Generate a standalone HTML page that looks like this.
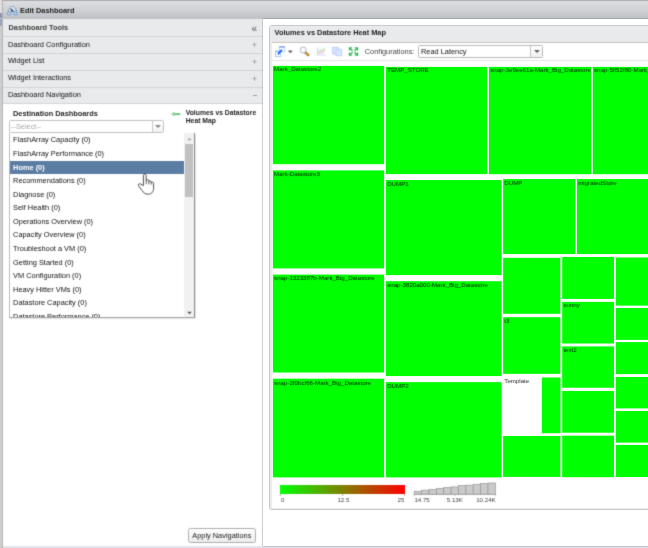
<!DOCTYPE html>
<html>
<head>
<meta charset="utf-8">
<title>Edit Dashboard</title>
<style>
html,body{margin:0;padding:0;}
body{width:648px;height:548px;overflow:hidden;background:#fff;font-family:"Liberation Sans",sans-serif;font-size:7.38px;color:#111;position:relative;}
div{box-sizing:border-box;}
.abs{position:absolute;}
#strip{left:0;top:0;width:3px;height:548px;background:linear-gradient(to right,#d0d0d0 0,#cccccc 55%,#b6b6b6 62%,#b4b4b4 100%);}
#titlebar{left:3px;top:0;width:645px;height:19px;background:linear-gradient(to bottom,#a9a9a9 0,#acacac 0.8px,#dcdee1 1.4px,#d2d4d8 8px,#bec1c5 18.4px,#c6c8cb 19px);}
#titletext{left:20px;top:5.6px;font-weight:bold;color:#222;line-height:9px;white-space:nowrap;}
#leftpanel{left:3px;top:19px;width:260.3px;height:527px;background:#fff;border-right:1.2px solid #ececec;}
.hrow{position:absolute;left:3px;width:260px;background:#e9eaeb;border-bottom:1px solid #d3d4d5;white-space:nowrap;color:#111;}
.hrow span{position:absolute;left:5px;}
.plus{position:absolute;color:#8c8c8c;}
#bottombar{left:3px;top:546px;width:645px;height:2px;background:#dfe5ea;}
.t{position:absolute;font-size:6.15px;line-height:7px;color:#001c00;overflow:hidden;white-space:nowrap;padding:0 0 0 1.2px;}
.li{height:13.58px;line-height:13.58px;padding-left:3.3px;white-space:nowrap;color:#111;}
.li.sel{background:#5b7da4;color:#fff;font-weight:bold;}
.bar{position:absolute;background:#cbcbcb;border:0.6px solid #9a9a9a;border-bottom:none;}
.lg{position:absolute;font-size:6.15px;color:#444;line-height:7px;white-space:nowrap;}
</style>
</head>
<body>
<svg width="0" height="0" style="position:absolute"><defs><filter id="softblur" x="0" y="0" width="100%" height="100%" color-interpolation-filters="sRGB"><feConvolveMatrix order="3" kernelMatrix="0.02 0.1 0.02 0.1 0.52 0.1 0.02 0.1 0.02" divisor="1" edgeMode="duplicate" preserveAlpha="true"/></filter><filter id="softblur2" x="0" y="0" width="100%" height="100%" color-interpolation-filters="sRGB"><feConvolveMatrix order="3" kernelMatrix="0.01 0.07 0.01 0.07 0.68 0.07 0.01 0.07 0.01" divisor="1" edgeMode="none" preserveAlpha="false"/></filter></defs></svg>
<div id="root" style="position:absolute;left:0;top:0;width:648px;height:548px;overflow:hidden;will-change:transform;">
<div id="base" style="position:absolute;left:0;top:0;width:648px;height:548px;overflow:hidden;filter:url(#softblur);">
<div id="strip" class="abs"></div>
<div class="abs" style="left:0;top:0;width:2.2px;height:12.6px;background:#dedede"></div>
<div class="abs" style="left:0;top:12.6px;width:2.2px;height:5px;background:#8898b0"></div>
<div class="abs" style="left:0;top:19.2px;width:2.2px;height:6.4px;background:#97a7bd"></div>
<div id="titlebar" class="abs"></div>
<svg class="abs" style="left:6px;top:5px" width="13" height="11" viewBox="6 5 13 11">
  <defs><linearGradient id="dg" x1="0" y1="0" x2="1" y2="1"><stop offset="0" stop-color="#ffffff"/><stop offset="1" stop-color="#9fc3ec"/></linearGradient></defs>
  <path d="M8.3 12.4 A4.2 6 0 0 1 16.7 12.4 L14.6 12.6 L12.5 10.2 L10.4 12.6 Z" fill="url(#dg)" stroke="#7d8794" stroke-width="0.7"/>
  <circle cx="9.2" cy="13.2" r="1.9" fill="#9dbfe6" stroke="#5e93d1" stroke-width="0.6"/>
  <circle cx="9" cy="13.2" r="0.6" fill="#eaf2fb"/>
  <circle cx="15.7" cy="13.2" r="1.9" fill="#9dbfe6" stroke="#5e93d1" stroke-width="0.6"/>
  <circle cx="15.6" cy="13" r="0.6" fill="#eaf2fb"/>
  <path d="M10.6 8.6 L13 11.7" stroke="#2a2a2a" stroke-width="1.1" fill="none"/>
</svg>
<div id="titletext" class="abs">Edit Dashboard</div>

<div id="leftpanel" class="abs"></div>
<div class="hrow" style="top:19px;height:18px;font-weight:bold;color:#3d3d3d"><span style="left:5.5px;top:3.5px;line-height:9px">Dashboard Tools</span></div>
<div class="hrow" style="top:37px;height:17px"><span style="left:4.9px;top:2.9px;line-height:9px">Dashboard Configuration</span></div>
<div class="hrow" style="top:54px;height:17px"><span style="left:4.9px;top:2.45px;line-height:9px">Widget List</span></div>
<div class="hrow" style="top:71px;height:17px"><span style="left:4.9px;top:2.45px;line-height:9px">Widget Interactions</span></div>
<div class="hrow" style="top:88px;height:16px"><span style="left:4.9px;top:2.05px;line-height:9px">Dashboard Navigation</span></div>
<!-- tool icons -->
<div class="abs" style="left:251.4px;top:23.6px;font-size:10px;line-height:10px;color:#555">&laquo;</div>
<div class="plus" style="left:252.1px;top:41.3px;font-size:8.6px;line-height:9px">+</div>
<div class="plus" style="left:252.1px;top:58px;font-size:8.6px;line-height:9px">+</div>
<div class="plus" style="left:252.1px;top:75px;font-size:8.6px;line-height:9px">+</div>
<div class="plus" style="left:252.2px;top:91.2px;font-size:8.6px;line-height:9px;color:#7a7a7a">&minus;</div>

<!-- navigation content -->
<div class="abs" style="left:13px;top:109.4px;font-weight:bold;line-height:9px;white-space:nowrap;color:#1c1c1c">Destination Dashboards</div>
<div class="abs" style="left:8.6px;top:119.6px;width:155px;height:13.4px;border:0.8px solid #c2c2c2;border-radius:1.6px;background:#fff;overflow:hidden"><div style="position:absolute;right:0;top:0;width:11px;height:12px;border-left:0.8px solid #c8c8c8;background:linear-gradient(#ffffff,#f1f1f1)"></div></div>
<svg class="abs" style="left:155px;top:124px" width="6" height="5" viewBox="0 0 6 5"><path d="M0.4 1 H5.6 V1.5 L3 4 L0.4 1.5 Z" fill="#8a8a8a"/></svg>
<div class="abs" style="left:11px;top:121.6px;line-height:9px;color:#aaa">--Select--</div>
<svg class="abs" style="left:170.5px;top:111px" width="10" height="6" viewBox="0 0 10 6">
  <path d="M3.2 2.3 H9.2 V3.9 H3.2 Z" fill="#48ba5b"/><path d="M0.5 3.1 L3.1 1.1 V5.1 Z" fill="#b5e8bd" stroke="#62c873" stroke-width="0.55" stroke-linejoin="round"/>
</svg>
<div class="abs" style="left:185.7px;top:109.1px;font-size:6.8px;font-weight:bold;line-height:7.4px;white-space:nowrap;color:#1c1c1c">Volumes vs Datastore<br>Heat Map</div>

<!-- dropdown -->
<div class="abs" style="left:8.8px;top:132.6px;width:185.8px;height:185.8px;background:#fff;border-left:0.8px solid #bdbdbd;border-right:0.8px solid #8e8e8e;border-bottom:0.8px solid #a4a4a4;box-shadow:0.5px 0.8px 1.5px rgba(0,0,0,0.3);overflow:hidden">
  <div style="position:absolute;left:0;top:0.8px;width:174.4px">
<div class="li">FlashArray Capacity (0)</div>
<div class="li">FlashArray Performance (0)</div>
<div class="li sel">Home (0)</div>
<div class="li">Recommendations (0)</div>
<div class="li">Diagnose (0)</div>
<div class="li">Self Health (0)</div>
<div class="li">Operations Overview (0)</div>
<div class="li">Capacity Overview (0)</div>
<div class="li">Troubleshoot a VM (0)</div>
<div class="li">Getting Started (0)</div>
<div class="li">VM Configuration (0)</div>
<div class="li">Heavy Hitter VMs (0)</div>
<div class="li">Datastore Capacity (0)</div>
<div class="li">Datastore Performance (0)</div>
  </div>
  <div style="position:absolute;left:174.4px;top:0;width:10.6px;height:186px;background:#f1f1f1"></div>
  <div style="position:absolute;left:175.3px;top:11.5px;width:8.1px;height:52.9px;background:#c1c1c1"></div>
  <svg style="position:absolute;left:177.6px;top:4.6px" width="5" height="4" viewBox="0 0 5 4"><path d="M0.3 3.2 L2.5 0.8 L4.7 3.2 Z" fill="#a8a8a8"/></svg>
  <svg style="position:absolute;left:177.6px;top:178.4px" width="5" height="4" viewBox="0 0 5 4"><path d="M0.3 0.8 L2.5 3.2 L4.7 0.8 Z" fill="#505050"/></svg>
</div>

<!-- apply button -->
<div class="abs" style="left:188px;top:528px;width:68px;height:15px;border:1px solid #adadad;border-radius:2.5px;background:linear-gradient(#ffffff,#ececec)"></div>
<div class="abs" style="left:192.3px;top:530.9px;line-height:9px;color:#1a1a1a;white-space:nowrap">Apply Navigations</div>

<!-- widget panel -->
<div class="abs" style="left:268.9px;top:25.3px;width:390px;height:484.3px;border:0.7px solid #e8e9ea;border-radius:3px;background:#e9eaeb"></div>
<div class="abs" style="left:274.6px;top:28.2px;font-weight:bold;line-height:9px;white-space:nowrap;color:#1c1c1c">Volumes vs Datastore Heat Map</div>
<div class="abs" style="left:271.6px;top:41.9px;width:380px;height:465.8px;background:#fff;border-top:0.8px solid #cbc1c2;border-radius:0 0 0 1px"></div>
<div class="abs" style="left:271.6px;top:60px;width:380px;height:0.8px;background:#e4e4e4"></div>
<!-- toolbar icons -->
<svg class="abs" style="left:272px;top:42px" width="90" height="18" viewBox="272 42 90 18">
  <rect x="279.7" y="46.6" width="4.9" height="5.2" fill="#ffffff" stroke="#9dbdec" stroke-width="0.7"/>
  <rect x="279.3" y="46.2" width="5.7" height="1.5" fill="#7ca6e4"/>
  <rect x="275.5" y="51.1" width="5.2" height="5.2" fill="#fafcff" stroke="#8db2ea" stroke-width="0.7"/>
  <rect x="275.1" y="50.7" width="6" height="1.4" fill="#9abbed"/>
  <path d="M278.7 53.4 L281.3 50.5" stroke="#0a5cf0" stroke-width="1.5" stroke-linecap="round" fill="none"/>
  <circle cx="278.6" cy="53.5" r="0.95" fill="#0a5cf0"/><circle cx="281.4" cy="50.4" r="0.95" fill="#0a5cf0"/>
  <path d="M288.2 50.6 H292.4 V51.2 L290.3 53.3 L288.2 51.2 Z" fill="#6a6a6a"/>
  <circle cx="303.2" cy="50" r="3.0" fill="#fcfdff" stroke="#a6b3c3" stroke-width="0.9"/>
  <path d="M305.8 52.8 L308.2 55" stroke="#8a6226" stroke-width="2.5" stroke-linecap="round" fill="none"/>
  <path d="M305.8 52.8 L308.2 55" stroke="#e0a24a" stroke-width="1.5" stroke-linecap="round" fill="none"/>
  <g opacity="0.75">
  <rect x="317.6" y="47.8" width="7.4" height="6.8" fill="#f1f5fb"/>
  <path d="M317.4 47.4 V54.9 H325.2" stroke="#a8c0e4" stroke-width="0.8" fill="none"/>
  <path d="M318 53.8 L320 52 L322 52.6 L325 49.8" stroke="#f19a86" stroke-width="0.9" fill="none"/>
  <path d="M318 52.2 L320 50.2 L322 51 L325 47.8" stroke="#8fd68f" stroke-width="0.9" fill="none"/>
  </g>
  <g opacity="0.8">
  <rect x="332.4" y="47.3" width="6.2" height="6.8" fill="#cfe0fb" stroke="#9dbef3" stroke-width="0.7"/>
  <rect x="335.9" y="49.3" width="5.9" height="6.5" fill="#cfe0fb" stroke="#9dbef3" stroke-width="0.7"/>
  </g>
  <g transform="translate(353.5,51.5)" fill="#35b257" stroke="#35b257">
    <g><path d="M-4.7 -4.3 H-1.0 L-4.7 -0.6 Z" stroke="none"/><path d="M-3.2 -2.8 L-0.9 -0.8" stroke-width="1.5" fill="none"/></g>
    <g transform="scale(-1,1)"><path d="M-4.7 -4.3 H-1.0 L-4.7 -0.6 Z" stroke="none"/><path d="M-3.2 -2.8 L-0.9 -0.8" stroke-width="1.5" fill="none"/></g>
    <g transform="scale(1,-1)"><path d="M-4.7 -4.3 H-1.0 L-4.7 -0.6 Z" stroke="none"/><path d="M-3.2 -2.8 L-0.9 -0.8" stroke-width="1.5" fill="none"/></g>
    <g transform="scale(-1,-1)"><path d="M-4.7 -4.3 H-1.0 L-4.7 -0.6 Z" stroke="none"/><path d="M-3.2 -2.8 L-0.9 -0.8" stroke-width="1.5" fill="none"/></g>
  </g>
</svg>
<div class="abs" style="left:364.8px;top:47.2px;line-height:9px;color:#444;white-space:nowrap">Configurations:</div>
<div class="abs" style="left:418.2px;top:44.6px;width:124.4px;height:13.4px;border:0.8px solid #b9b9b9;border-radius:1.6px;background:#fff;overflow:hidden"><div style="position:absolute;right:0;top:0;width:11.4px;height:12px;border-left:0.8px solid #c4c4c4;background:linear-gradient(#ffffff,#efefef)"></div></div>
<svg class="abs" style="left:533.8px;top:49.2px" width="6" height="5" viewBox="0 0 6 5"><path d="M0.4 1 H5.6 V1.5 L3 4 L0.4 1.5 Z" fill="#666"/></svg>
<div class="abs" style="left:421px;top:47.3px;line-height:9px;color:#111;white-space:nowrap">Read Latency</div>

<!-- legend -->
<div class="abs" style="left:280.4px;top:484.7px;width:124.2px;height:9.5px;background:linear-gradient(to right,#00ff00,#ff0000)"></div>
<div class="abs" style="left:280.4px;top:494.2px;width:0.7px;height:1.5px;background:#b5b5b5"></div>
<div class="abs" style="left:342.2px;top:494.2px;width:0.7px;height:1.5px;background:#b5b5b5"></div>
<div class="abs" style="left:404px;top:494.2px;width:0.7px;height:1.5px;background:#b5b5b5"></div>
<div class="lg" style="left:281px;top:496.4px">0</div>
<div class="lg" style="left:337.4px;top:496.4px">12.5</div>
<div class="lg" style="left:397.6px;top:496.4px">25</div>
<svg class="abs" style="left:410px;top:480px" width="90" height="18" viewBox="410 480 90 18">
<rect x="414.20" y="491.30" width="7.38" height="3.00" fill="#cacaca" stroke="#989898" stroke-width="0.7"/>
<rect x="421.58" y="490.20" width="7.38" height="4.10" fill="#cacaca" stroke="#989898" stroke-width="0.7"/>
<rect x="428.96" y="489.50" width="7.38" height="4.80" fill="#cacaca" stroke="#989898" stroke-width="0.7"/>
<rect x="436.35" y="488.40" width="7.38" height="5.90" fill="#cacaca" stroke="#989898" stroke-width="0.7"/>
<rect x="443.73" y="487.60" width="7.38" height="6.70" fill="#cacaca" stroke="#989898" stroke-width="0.7"/>
<rect x="451.11" y="486.90" width="7.38" height="7.40" fill="#cacaca" stroke="#989898" stroke-width="0.7"/>
<rect x="458.49" y="485.60" width="7.38" height="8.70" fill="#cacaca" stroke="#989898" stroke-width="0.7"/>
<rect x="465.87" y="485.20" width="7.38" height="9.10" fill="#cacaca" stroke="#989898" stroke-width="0.7"/>
<rect x="473.25" y="484.30" width="7.38" height="10.00" fill="#cacaca" stroke="#989898" stroke-width="0.7"/>
<rect x="480.64" y="483.50" width="7.38" height="10.80" fill="#cacaca" stroke="#989898" stroke-width="0.7"/>
<rect x="488.02" y="483.00" width="7.38" height="11.30" fill="#cacaca" stroke="#989898" stroke-width="0.7"/>
<path d="M414.2 494.3 H495.4 M414.2 494.3 V496.2 M454.8 494.3 V496.2 M495.4 494.3 V496.2" stroke="#9a9a9a" stroke-width="0.6" fill="none"/>
</svg>

<div class="lg" style="left:414.4px;top:496.2px">14.75</div>
<div class="lg" style="left:446.8px;top:496.2px">5.13K</div>
<div class="lg" style="left:476.2px;top:496.2px">10.24K</div>

<!-- cursor -->
<svg class="abs" style="left:137px;top:172.9px" width="19" height="23" viewBox="0 0 19 23">
 <path d="M6.4 12.6 V2.4 C6.4 0.6 9.2 0.6 9.2 2.4 V7.6 C9.2 6.2 11.8 6.4 11.8 7.8 V8.6 C11.8 7.4 14.2 7.6 14.2 9 V9.8 C14.2 8.6 16.6 8.8 16.6 10.4 V15.2 C16.6 19 14.4 21.2 11.2 21.2 C8.2 21.2 6.6 19.8 5 17.6 L1.6 12.8 C0.6 11.2 2.4 10 3.8 11.2 Z" fill="#fff" stroke="#3a3a3a" stroke-width="0.9" stroke-linejoin="round"/>
 <path d="M9.2 7.6 V11.2 M11.8 8.6 V11.4 M14.2 9.8 V11.6" stroke="#3a3a3a" stroke-width="0.8" fill="none"/>
</svg>
<div id="bottombar" class="abs"></div>
</div>
<!-- heat map -->
<svg class="abs" style="left:272px;top:64px" width="376" height="416" viewBox="272 64 376 416">
<rect x="272.9" y="65.9" width="111.20" height="98.30" fill="#00ff00"/>
<rect x="272.9" y="170.4" width="111.20" height="98.00" fill="#00ff00"/>
<rect x="272.9" y="274.6" width="111.20" height="97.90" fill="#00ff00"/>
<rect x="272.9" y="378.7" width="111.20" height="98.70" fill="#00ff00"/>
<rect x="386.0" y="66.9" width="101.10" height="107.20" fill="#00ff00"/>
<rect x="386.0" y="180.05" width="115.60" height="95.00" fill="#00ff00"/>
<rect x="386.0" y="281.2" width="115.60" height="94.85" fill="#00ff00"/>
<rect x="386.0" y="382.15" width="115.60" height="95.25" fill="#00ff00"/>
<rect x="489.0" y="66.9" width="102.00" height="107.30" fill="#00ff00"/>
<rect x="592.85" y="66.9" width="55.15" height="107.30" fill="#00ff00"/>
<rect x="503.15" y="179.05" width="72.20" height="75.00" fill="#00ff00"/>
<rect x="577.0" y="179.05" width="71.00" height="75.00" fill="#00ff00"/>
<rect x="503.15" y="257.85" width="57.20" height="55.95" fill="#00ff00"/>
<rect x="503.15" y="317.2" width="57.20" height="56.65" fill="#00ff00"/>
<rect x="541.9" y="377.5" width="18.60" height="55.70" fill="#00ff00"/>
<rect x="503.15" y="436.0" width="57.25" height="40.90" fill="#00ff00"/>
<rect x="562.2" y="257.0" width="51.80" height="41.90" fill="#00ff00"/>
<rect x="562.2" y="301.9" width="51.80" height="41.60" fill="#00ff00"/>
<rect x="562.2" y="346.4" width="51.80" height="41.35" fill="#00ff00"/>
<rect x="562.2" y="391.0" width="51.80" height="41.70" fill="#00ff00"/>
<rect x="562.2" y="435.7" width="51.80" height="41.50" fill="#00ff00"/>
<rect x="615.8" y="257.5" width="32.20" height="48.10" fill="#00ff00"/>
<rect x="615.8" y="308.0" width="32.20" height="31.90" fill="#00ff00"/>
<rect x="615.8" y="342.1" width="32.20" height="32.00" fill="#00ff00"/>
<rect x="615.8" y="377.0" width="32.20" height="31.40" fill="#00ff00"/>
<rect x="615.8" y="411.0" width="32.20" height="31.60" fill="#00ff00"/>
<rect x="615.8" y="444.9" width="32.20" height="32.10" fill="#00ff00"/>
</svg>
<div id="labels" style="position:absolute;left:0;top:0;width:648px;height:548px;overflow:hidden;filter:url(#softblur2);">
<div class="t" style="left:272.9px;top:65.37px;width:111.20px;height:9px">Mark_Datastore2</div>
<div class="t" style="left:272.9px;top:169.57px;width:111.20px;height:9px">Mark-Datastore3</div>
<div class="t" style="left:272.9px;top:274.07px;width:111.20px;height:9px">snap-1323387b-Mark_Big_Datastore</div>
<div class="t" style="left:272.9px;top:378.57px;width:111.20px;height:9px">snap-2f0bcf66-Mark_Big_Datastore</div>
<div class="t" style="left:386.0px;top:66.17px;width:101.10px;height:9px">TEMP_STORE</div>
<div class="t" style="left:386.0px;top:180.07px;width:115.60px;height:9px">DUMP1</div>
<div class="t" style="left:386.0px;top:280.87px;width:115.60px;height:9px">snap-3820a000-Mark_Big_Datastore</div>
<div class="t" style="left:386.0px;top:382.07px;width:115.60px;height:9px">DUMP2</div>
<div class="t" style="left:489.0px;top:65.97px;width:102.00px;height:9px">snap-3e9ee61a-Mark_Big_Datastore</div>
<div class="t" style="left:592.85px;top:65.97px;width:55.15px;height:9px">snap-5ff52f80-Mark_Big_Datastore</div>
<div class="t" style="left:503.15px;top:179.17px;width:72.20px;height:9px">DUMP</div>
<div class="t" style="left:577.0px;top:178.87px;width:71.00px;height:9px">migratedStore</div>
<div class="t" style="left:503.15px;top:316.97px;width:57.20px;height:9px">t3</div>
<div class="t" style="color:#222;left:503.15px;top:376.87px;width:38.25px;height:9px">Template</div>
<div class="t" style="left:562.2px;top:301.07px;width:51.80px;height:9px">sunny</div>
<div class="t" style="left:562.2px;top:346.17px;width:51.80px;height:9px">test2</div>
</div>

</div>
</body>
</html>
